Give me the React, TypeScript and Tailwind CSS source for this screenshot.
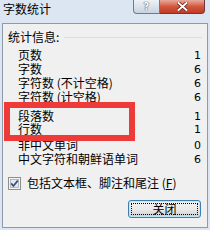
import React from 'react';

const rows: { label: string; value: string; cls: string }[] = [
  { label: '页数', value: '1', cls: 'mt-[4px] h-[14px]' },
  { label: '字数', value: '6', cls: 'h-[14px]' },
  { label: '字符数 (不计空格)', value: '6', cls: 'h-[14px]' },
  { label: '字符数 (计空格)', value: '6', cls: 'h-[14px]' },
  { label: '段落数', value: '1', cls: 'mt-[6px] h-[12px]' },
  { label: '行数', value: '1', cls: 'h-[14px]' },
  { label: '非中文单词', value: '0', cls: 'mt-[2px] h-[14px]' },
  { label: '中文字符和朝鲜语单词', value: '6', cls: 'h-[14px]' },
];

const font = { fontFamily: '"Noto Sans CJK SC", "Liberation Sans", sans-serif' };

function TitleButtons() {
  return (
    <div className="flex mr-[5px]">
      <div className="w-[27px] h-[14px] border border-[#6b7c92] border-t-0 rounded-bl-[4px] bg-gradient-to-b from-[#eef2f7] to-[#c8d3e0] flex items-center justify-center">
        <span
          className="text-[10px] leading-[10px] font-bold text-white [text-shadow:0_0_1px_#33425a,0_0_1px_#33425a]"
          style={{ fontFamily: '"DejaVu Sans", sans-serif' }}
        >
          ?
        </span>
      </div>
      <div className="w-[45px] h-[14px] border border-[#6b3a34] border-t-0 border-l-0 rounded-br-[4px] bg-gradient-to-b from-[#e9a99b] via-[#d2573f] to-[#c13a22] flex items-center justify-center">
        <svg width="11" height="9" viewBox="0 0 11 9">
          <path d="M1.5 1 L9.5 8 M9.5 1 L1.5 8" stroke="#5a1a10" strokeWidth="3.4" strokeLinecap="square" />
          <path d="M1.5 1 L9.5 8 M9.5 1 L1.5 8" stroke="#ffffff" strokeWidth="2" strokeLinecap="square" />
        </svg>
      </div>
    </div>
  );
}

export default function App() {
  return (
    <div className="w-[210px] h-[230px] bg-[#dce6f2] overflow-hidden text-black" style={font}>
      <div className="h-[23px] flex justify-between items-start">
        <span className="pl-[3px] pt-[2px] text-[12px] leading-[14px] text-black">字数统计</span>
        <TitleButtons />
      </div>

      <div className="relative ml-[2px] w-[206px] h-[205px] bg-[#f0f0f0] border border-[#8e9aa8]">
        <div className="flex items-center mt-[6px] pl-[5px] pr-[5px] h-[14px]">
          <span className="text-[12px] leading-[12px]">统计信息:</span>
          <div className="flex-1 ml-[5px] border-t border-[#d5dfe5]"></div>
        </div>

        <div className="pl-[15px] pr-[6px]">
          {rows.map((r) => (
            <div key={r.label} className={`flex items-center justify-between text-[12px] ${r.cls}`}>
              <span className="leading-[12px]">{r.label}</span>
              <span className="text-[11px] leading-[11px]" style={{ fontFamily: '"DejaVu Sans", sans-serif' }}>
                {r.value}
              </span>
            </div>
          ))}
        </div>

        <div className="flex items-center mt-[10px] pl-[5px] h-[14px]">
          <svg width="13" height="13" viewBox="0 0 13 13">
            <rect x="0.5" y="0.5" width="12" height="12" fill="#f4f4f4" stroke="#8e8f8f" />
            <rect x="2.5" y="2.5" width="8" height="8" fill="#e4e8ec" stroke="#b4bac2" />
            <path d="M3.2 6.4 L5.4 9 L9.8 3.6" stroke="#3b4d7a" strokeWidth="1.7" fill="none" />
          </svg>
          <span className="ml-[6px] text-[12px] leading-[12px]">
            包括文本框、脚注和尾注 (<span className="underline">F</span>)
          </span>
        </div>

        <div className="flex justify-end mt-[10px] pr-[6px]">
          <div className="w-[73px] h-[18px] rounded-[3px] border border-[#3c7fb1] bg-gradient-to-b from-[#f2f2f2] via-[#ebebeb] to-[#cfcfcf] p-[2px] shadow-[inset_0_0_0_1px_#bfe6f7]">
            <div className="h-full border border-dotted border-black flex items-center justify-center text-[12px] leading-none">
              关闭
            </div>
          </div>
        </div>

        <div className="absolute left-[1px] top-[78px] w-[131px] h-[39px] border-[6px] border-[#ef3a3a]"></div>
      </div>
    </div>
  );
}
